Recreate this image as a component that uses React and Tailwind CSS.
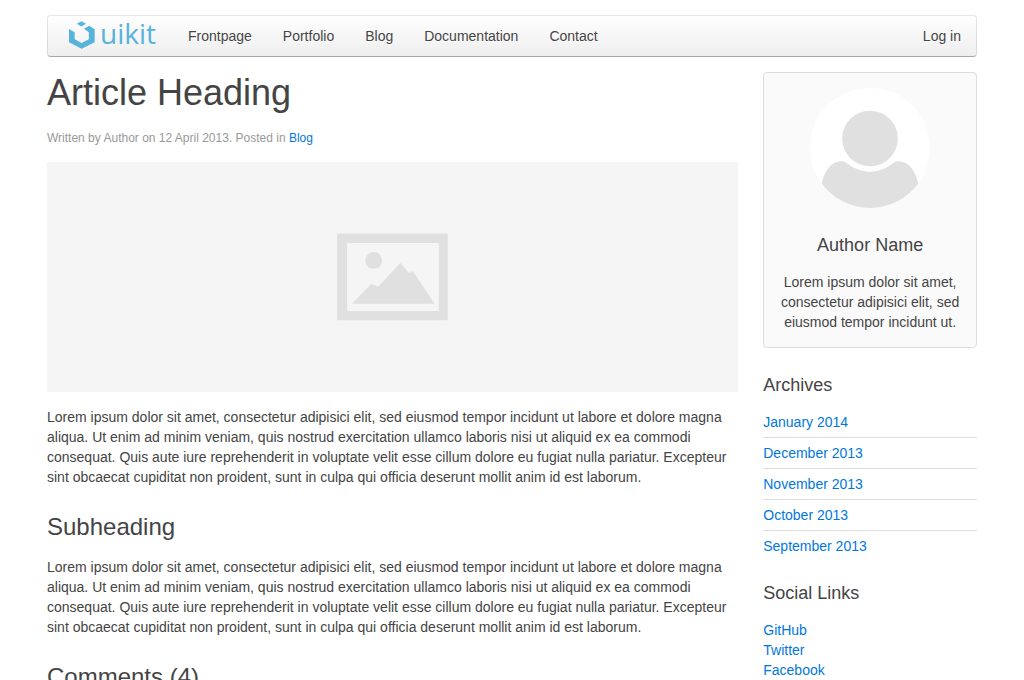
const navItems = ["Frontpage", "Portfolio", "Blog", "Documentation", "Contact"];
const archives = ["January 2014", "December 2013", "November 2013", "October 2013", "September 2013"];
const socialLinks = ["GitHub", "Twitter", "Facebook"];
const lorem =
  "Lorem ipsum dolor sit amet, consectetur adipisici elit, sed eiusmod tempor incidunt ut labore et dolore magna aliqua. Ut enim ad minim veniam, quis nostrud exercitation ullamco laboris nisi ut aliquid ex ea commodi consequat. Quis aute iure reprehenderit in voluptate velit esse cillum dolore eu fugiat nulla pariatur. Excepteur sint obcaecat cupiditat non proident, sunt in culpa qui officia deserunt mollit anim id est laborum.";

function Brand() {
  return (
    <a href="#" aria-label="uikit" className="mr-[17px] flex h-10 items-start gap-[5px] pt-[5px] pl-[21px] text-[#56b4dc]">
      <svg viewBox="9 10 78 84" className="h-[28px] w-[26px]" fill="currentColor" aria-hidden="true">
        <path d="M46 10.500 60 18.500 46 26.500 32.500 18.500Z" />
        <path d="M9 34 26 44V65L47 76 68.500 65V44L54 33 69 24 86 35V74L47 93 9 74Z" />
      </svg>
      <span className="font-['Open_Sans','Noto_Sans',sans-serif] text-[28px] leading-6">uikit</span>
    </a>
  );
}

function Navbar() {
  return (
    <nav className="flex items-center justify-between rounded border border-black/10 border-b-black/30 bg-linear-to-b from-white to-[#eee] bg-origin-border">
      <div className="flex items-center">
        <Brand />
        <ul className="flex gap-px">
          {navItems.map((item) => (
            <li key={item}>
              <a href="#" className="block px-[15px] leading-10 [text-shadow:0_1px_0_#fff]">
                {item}
              </a>
            </li>
          ))}
        </ul>
      </div>
      <a href="#" className="block px-[15px] leading-10 [text-shadow:0_1px_0_#fff]">
        Log in
      </a>
    </nav>
  );
}

function Placeholder() {
  return (
    <svg viewBox="0 0 691 230" className="mt-[15px] block w-full bg-[#f5f5f5]" role="img" aria-label="Placeholder">
      <path
        fill="#e0e0e0"
        fillRule="evenodd"
        d="M290 71.6H400.6V158.3H290ZM300 81V149H391.7V81Z"
      />
      <circle cx="326.6" cy="98.4" r="8.4" fill="#e0e0e0" />
      <path fill="#e0e0e0" d="M305 141.8 324 122 331 124.6 353.2 101 362.3 111.3 365.7 109 387.5 141.8Z" />
    </svg>
  );
}

function Avatar() {
  return (
    <svg viewBox="0 0 120 120" className="mx-auto block size-[120px]" role="img" aria-label="Author">
      <circle cx="60" cy="60" r="60" fill="#fff" />
      <circle cx="60" cy="50.5" r="27.8" fill="#e0e0e0" />
      <path
        fill="#e0e0e0"
        d="M11.7 95.6C14.5 83 21 73.3 31.5 73.3C33.5 73.3 34.8 73.6 36 74.5C43.5 80.5 51 83.7 60 83.7S76.500 80.5 84 74.500C85.200 73.600 86.500 73.300 88.500 73.300C99 73.300 105.500 83 108.300 95.600A60 60 0 0 1 11.700 95.600Z"
      />
    </svg>
  );
}

function Sidebar() {
  return (
    <aside className="col-span-1">
      <section className="rounded border border-[#ddd] bg-[#fafafa] p-[15px] text-center">
        <Avatar />
        <h3 className="mt-[25px] text-lg leading-6">Author Name</h3>
        <p className="mt-[15px]">Lorem ipsum dolor sit amet, consectetur adipisici elit, sed eiusmod tempor incidunt ut.</p>
      </section>
      <section className="mt-[25px]">
        <h3 className="text-lg leading-6">Archives</h3>
        <ul className="mt-[15px]">
          {archives.map((month) => (
            <li key={month} className="mt-[5px] border-t border-[#ddd] pt-[5px] first:mt-0 first:border-t-0 first:pt-0">
              <a href="#" className="text-[#07d]">
                {month}
              </a>
            </li>
          ))}
        </ul>
      </section>
      <section className="mt-[25px]">
        <h3 className="text-lg leading-6">Social Links</h3>
        <ul className="mt-[15px]">
          {socialLinks.map((name) => (
            <li key={name}>
              <a href="#" className="text-[#07d]">
                {name}
              </a>
            </li>
          ))}
        </ul>
      </section>
    </aside>
  );
}

export default function App() {
  return (
    <div className="mx-auto max-w-[980px] bg-white px-[25px] pt-[15px] font-['Liberation_Sans',Arial,sans-serif] text-sm leading-5 text-[#444]">
      <Navbar />
      <div className="mt-[15px] grid grid-cols-4 gap-x-[25px]">
        <main className="col-span-3">
          <article>
            <h1 className="text-4xl leading-[42px]">Article Heading</h1>
            <p className="mt-[15px] text-xs leading-[18px] text-[#999]">
              Written by Author on 12 April 2013. Posted in{" "}
              <a href="#" className="text-[#07d]">
                Blog
              </a>
            </p>
            <Placeholder />
            <p className="mt-[15px]">{lorem}</p>
            <h2 className="mt-[25px] text-2xl leading-[30px]">Subheading</h2>
            <p className="mt-[15px]">{lorem}</p>
          </article>
          <h2 className="mt-[25px] text-2xl leading-[30px]">Comments (4)</h2>
        </main>
        <Sidebar />
      </div>
    </div>
  );
}
